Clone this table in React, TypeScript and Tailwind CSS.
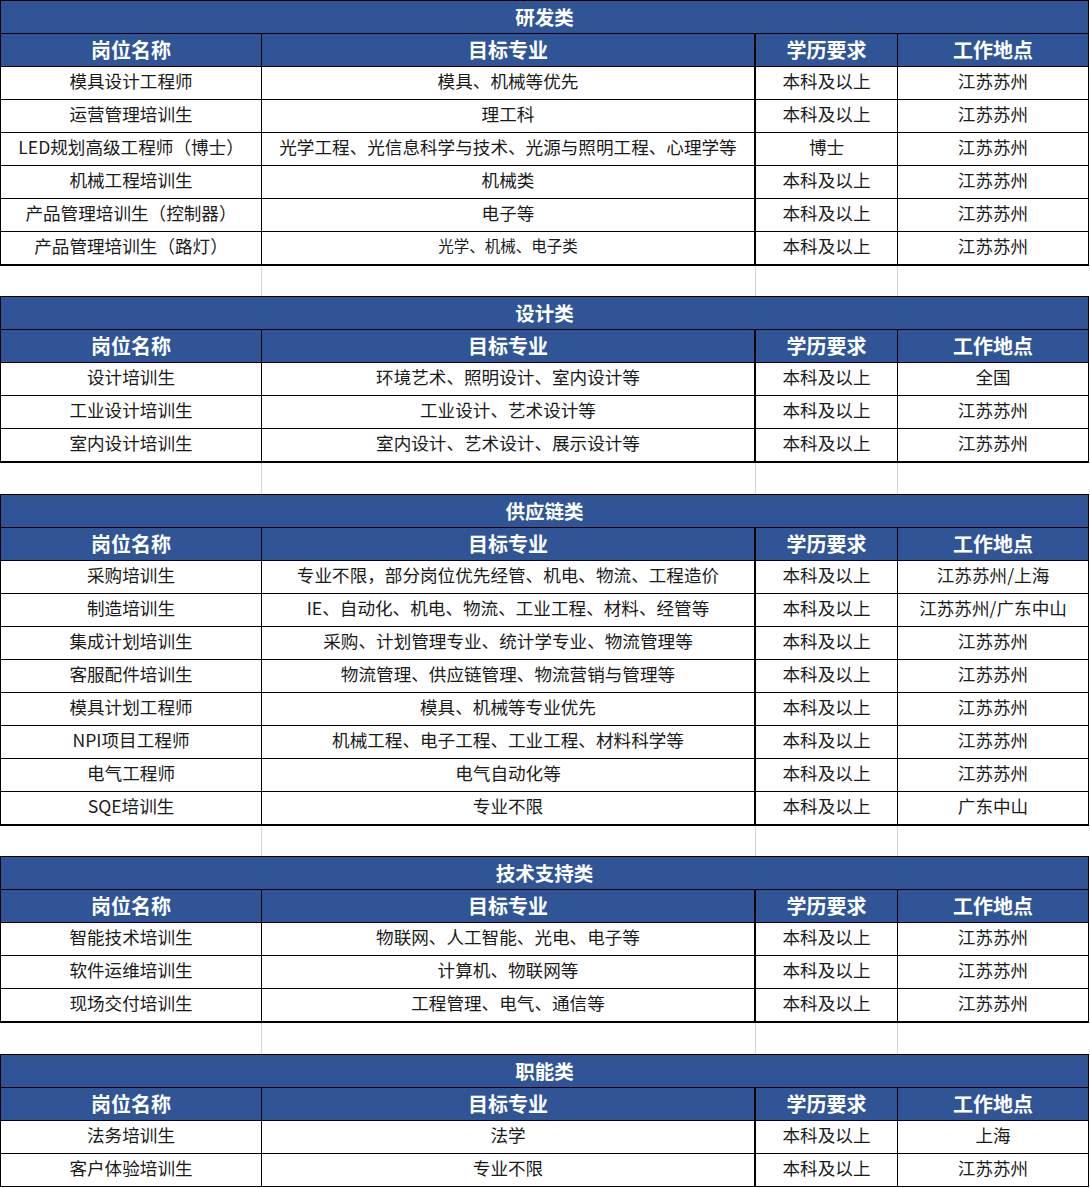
type Job = { name: string; major: string; edu: string; place: string; small?: boolean };
type Section = { title: string; jobs: Job[]; gap: string };

const sections: Section[] = [
  {
    title: "研发类",
    gap: "h-[30px]",
    jobs: [
      { name: "模具设计工程师", major: "模具、机械等优先", edu: "本科及以上", place: "江苏苏州" },
      { name: "运营管理培训生", major: "理工科", edu: "本科及以上", place: "江苏苏州" },
      { name: "LED规划高级工程师（博士）", major: "光学工程、光信息科学与技术、光源与照明工程、心理学等", edu: "博士", place: "江苏苏州" },
      { name: "机械工程培训生", major: "机械类", edu: "本科及以上", place: "江苏苏州" },
      { name: "产品管理培训生（控制器）", major: "电子等", edu: "本科及以上", place: "江苏苏州" },
      { name: "产品管理培训生（路灯）", major: "光学、机械、电子类", edu: "本科及以上", place: "江苏苏州", small: true },
    ],
  },
  {
    title: "设计类",
    gap: "h-[31px]",
    jobs: [
      { name: "设计培训生", major: "环境艺术、照明设计、室内设计等", edu: "本科及以上", place: "全国" },
      { name: "工业设计培训生", major: "工业设计、艺术设计等", edu: "本科及以上", place: "江苏苏州" },
      { name: "室内设计培训生", major: "室内设计、艺术设计、展示设计等", edu: "本科及以上", place: "江苏苏州" },
    ],
  },
  {
    title: "供应链类",
    gap: "h-[30px]",
    jobs: [
      { name: "采购培训生", major: "专业不限，部分岗位优先经管、机电、物流、工程造价", edu: "本科及以上", place: "江苏苏州/上海" },
      { name: "制造培训生", major: "IE、自动化、机电、物流、工业工程、材料、经管等", edu: "本科及以上", place: "江苏苏州/广东中山" },
      { name: "集成计划培训生", major: "采购、计划管理专业、统计学专业、物流管理等", edu: "本科及以上", place: "江苏苏州" },
      { name: "客服配件培训生", major: "物流管理、供应链管理、物流营销与管理等", edu: "本科及以上", place: "江苏苏州" },
      { name: "模具计划工程师", major: "模具、机械等专业优先", edu: "本科及以上", place: "江苏苏州" },
      { name: "NPI项目工程师", major: "机械工程、电子工程、工业工程、材料科学等", edu: "本科及以上", place: "江苏苏州" },
      { name: "电气工程师", major: "电气自动化等", edu: "本科及以上", place: "江苏苏州" },
      { name: "SQE培训生", major: "专业不限", edu: "本科及以上", place: "广东中山" },
    ],
  },
  {
    title: "技术支持类",
    gap: "h-[31px]",
    jobs: [
      { name: "智能技术培训生", major: "物联网、人工智能、光电、电子等", edu: "本科及以上", place: "江苏苏州" },
      { name: "软件运维培训生", major: "计算机、物联网等", edu: "本科及以上", place: "江苏苏州" },
      { name: "现场交付培训生", major: "工程管理、电气、通信等", edu: "本科及以上", place: "江苏苏州" },
    ],
  },
  {
    title: "职能类",
    gap: "h-0",
    jobs: [
      { name: "法务培训生", major: "法学", edu: "本科及以上", place: "上海" },
      { name: "客户体验培训生", major: "专业不限", edu: "本科及以上", place: "江苏苏州" },
    ],
  },
];

const font = { fontFamily: '"Noto Sans CJK SC", "Noto Sans", sans-serif' };

const Spacer = ({ h }: { h: string }) => (
  <div className={"grid grid-cols-[261px_494px_142px_190px] pl-px " + h}>
    <div className="border-r border-[#d4d4d4]" />
    <div className="border-r border-[#d4d4d4]" />
    <div className="border-r border-[#d4d4d4]" />
    <div />
  </div>
);

const Block = ({ s, last }: { s: Section; last: boolean }) => (
  <div className="w-[1089px] border-x border-t border-black">
    <div className="h-[33px] border-b border-black bg-[#2f5597] flex items-center justify-center text-white font-bold text-[19.5px]">
      {s.title}
    </div>
    <div className="grid grid-cols-[261px_494px_142px_190px] h-[33px] border-b border-black bg-[#2f5597] text-white font-bold text-[20px]">
      <div className="border-r border-black flex items-center justify-center">岗位名称</div>
      <div className="border-r-2 border-black flex items-center justify-center">目标专业</div>
      <div className="border-r border-black flex items-center justify-center">学历要求</div>
      <div className="flex items-center justify-center">工作地点</div>
    </div>
    {s.jobs.map((j, i) => {
      const end = i === s.jobs.length - 1;
      return (
        <div
          key={j.name}
          className={
            "grid grid-cols-[261px_494px_142px_190px] border-black text-[#1a1a1a] text-[17.6px] " +
            (end && !last ? "border-b-2 h-[34px]" : "border-b h-[33px]")
          }
        >
          <div className="border-r border-black flex items-center justify-center whitespace-nowrap pb-[4px]">{j.name}</div>
          <div
            className={
              "border-r-2 border-black flex items-center justify-center whitespace-nowrap pb-[4px] " +
              (j.small ? "text-[15.5px]" : "")
            }
          >
            {j.major}
          </div>
          <div className="border-r border-black flex items-center justify-center pb-[4px]">{j.edu}</div>
          <div className="flex items-center justify-center whitespace-nowrap pb-[4px]">{j.place}</div>
        </div>
      );
    })}
  </div>
);

export default function App() {
  return (
    <div className="bg-white w-[1090px] min-h-[1188px] leading-none" style={font}>
      {sections.map((s, i) => (
        <div key={s.title}>
          <Block s={s} last={i === sections.length - 1} />
          {i < sections.length - 1 && <Spacer h={s.gap} />}
        </div>
      ))}
    </div>
  );
}
